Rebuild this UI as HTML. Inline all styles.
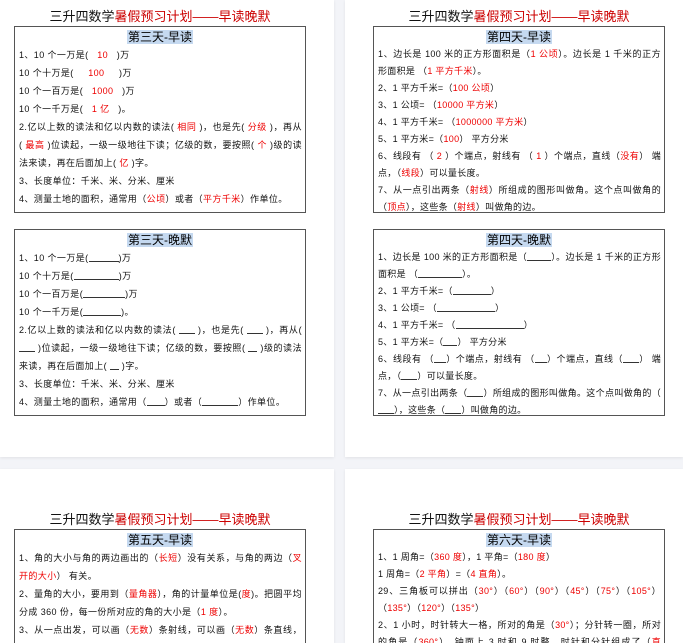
<!DOCTYPE html>
<html style="overflow:hidden;height:643px"><head><meta charset="utf-8"><style>
body{margin:0;width:683px;height:643px;overflow:hidden;background:#f3f4f8;font-family:"Liberation Sans","Noto Sans CJK SC",sans-serif;position:relative}
.pg{position:absolute;background:#fff;box-shadow:0 1px 3px rgba(0,0,0,.08)}
.t{position:absolute;width:292px;text-align:center;font-size:13px;line-height:16px;color:#111}
.t span{color:#c00}
.box{position:absolute;width:290px;border:1px solid #555;box-sizing:content-box;padding:0 0 4px 0;background:#fff;overflow:hidden}
.h{text-align:center;font-size:12px;line-height:18px;height:18px;margin-top:1px}
.h span{background:#c5d9f0;padding:0 1px}
.b{font-size:9px;line-height:18px;color:#111;padding:0 3px 0 4px;text-align:justify;letter-spacing:.4px}
.rb{letter-spacing:.3px;line-height:17px}
.r{color:#e00}
u{text-decoration:none;display:inline-block;border-bottom:1px solid #333;height:9px;vertical-align:-1px}
</style></head><body>
<div class="pg" style="left:0;top:0;width:334px;height:457px"></div>
<div class="pg" style="left:345px;top:0;width:338px;height:457px"></div>
<div class="pg" style="left:0;top:469px;width:334px;height:174px"></div>
<div class="pg" style="left:345px;top:469px;width:338px;height:174px"></div>

<div class="t" style="left:14px;top:9px">三升四数学<span>暑假预习计划——早读晚默</span></div>
<div class="box" style="left:14px;top:26px;height:181px">
<div class="h"><span>第三天-早读</span></div>
<div class="b">1、10 个一万是(&nbsp;&nbsp;&nbsp;<span class="r">10</span>&nbsp;&nbsp;&nbsp;)万<br>10 个十万是(&nbsp;&nbsp;&nbsp;&nbsp;&nbsp;<span class="r">100</span>&nbsp;&nbsp;&nbsp;&nbsp;&nbsp;)万<br>10 个一百万是(&nbsp;&nbsp;&nbsp;<span class="r">1000</span>&nbsp;&nbsp;&nbsp;)万<br>10 个一千万是(&nbsp;&nbsp;&nbsp;<span class="r">1 亿</span>&nbsp;&nbsp;&nbsp;)。<br>2.亿以上数的读法和亿以内数的读法(&nbsp;<span class="r">相同</span>&nbsp;)，也是先(&nbsp;<span class="r">分级</span>&nbsp;)，再从(&nbsp;<span class="r">最高</span>&nbsp;)位读起，一级一级地往下读；亿级的数，要按照(&nbsp;<span class="r">个</span>&nbsp;)级的读法来读，再在后面加上(&nbsp;<span class="r">亿</span>&nbsp;)字。<br>3、长度单位：千米、米、分米、厘米<br>4、测量土地的面积，通常用（<span class="r">公顷</span>）或者（<span class="r">平方千米</span>）作单位。</div>
</div>

<div class="t" style="left:373px;top:9px">三升四数学<span>暑假预习计划——早读晚默</span></div>
<div class="box" style="left:373px;top:26px;height:181px">
<div class="h"><span>第四天-早读</span></div>
<div class="b rb">1、边长是 100 米的正方形面积是（<span class="r">1 公顷</span>）。边长是 1 千米的正方形面积是 （<span class="r">1 平方千米</span>）。<br>2、1 平方千米=（<span class="r">100 公顷</span>）<br>3、1 公顷= （<span class="r">10000 平方米</span>）<br>4、1 平方千米= （<span class="r">1000000 平方米</span>）<br>5、1 平方米=（<span class="r">100</span>） 平方分米<br>6、线段有 （ <span class="r">2</span> ）个端点，射线有 （ <span class="r">1</span> ）个端点，直线（<span class="r">没有</span>） 端点，（<span class="r">线段</span>）可以量长度。<br>7、从一点引出两条（<span class="r">射线</span>）所组成的图形叫做角。这个点叫做角的（<span class="r">顶点</span>），这些条（<span class="r">射线</span>）叫做角的边。</div>
</div>

<div class="box" style="left:14px;top:229px;height:181px">
<div class="h"><span>第三天-晚默</span></div>
<div class="b">1、10 个一万是(<u style="width:30px"></u>)万<br>10 个十万是(<u style="width:45px"></u>)万<br>10 个一百万是(<u style="width:42px"></u>)万<br>10 个一千万是(<u style="width:38px"></u>)。<br>2.亿以上数的读法和亿以内数的读法( <u style="width:16px"></u> )，也是先( <u style="width:16px"></u> )，再从( <u style="width:16px"></u> )位读起，一级一级地往下读；亿级的数，要按照( <u style="width:9px"></u> )级的读法来读，再在后面加上( <u style="width:9px"></u> )字。<br>3、长度单位：千米、米、分米、厘米<br>4、测量土地的面积，通常用（<u style="width:18px"></u>）或者（<u style="width:36px"></u>）作单位。</div>
</div>

<div class="box" style="left:373px;top:229px;height:181px">
<div class="h"><span>第四天-晚默</span></div>
<div class="b rb">1、边长是 100 米的正方形面积是（<u style="width:24px"></u>）。边长是 1 千米的正方形面积是 （<u style="width:44px"></u>）。<br>2、1 平方千米=（<u style="width:38px"></u>）<br>3、1 公顷= （<u style="width:58px"></u>）<br>4、1 平方千米= （<u style="width:68px"></u>）<br>5、1 平方米=（<u style="width:14px"></u>） 平方分米<br>6、线段有 （<u style="width:12px"></u>）个端点，射线有 （<u style="width:12px"></u>）个端点，直线（<u style="width:16px"></u>） 端点，（<u style="width:16px"></u>）可以量长度。<br>7、从一点引出两条（<u style="width:16px"></u>）所组成的图形叫做角。这个点叫做角的（<u style="width:8px"></u><u style="width:8px"></u>），这些条（<u style="width:16px"></u>）叫做角的边。</div>
</div>

<div class="t" style="left:14px;top:512px">三升四数学<span>暑假预习计划——早读晚默</span></div>
<div class="box" style="left:14px;top:529px;height:114px;border-bottom:none;padding:0">
<div class="h"><span>第五天-早读</span></div>
<div class="b">1、角的大小与角的两边画出的（<span class="r">长短</span>）没有关系，与角的两边（<span class="r">叉开的大小</span>） 有关。<br>2、量角的大小，要用到（<span class="r">量角器</span>），角的计量单位是(<span class="r">度</span>)。把圆平均分成 360 份，每一份所对应的角的大小是（<span class="r">1 度</span>）。<br>3、从一点出发，可以画（<span class="r">无数</span>）条射线，可以画（<span class="r">无数</span>）条直线，经过两点可以画（<span class="r">1</span>）条直线。</div>
</div>

<div class="t" style="left:373px;top:512px">三升四数学<span>暑假预习计划——早读晚默</span></div>
<div class="box" style="left:373px;top:529px;height:114px;border-bottom:none;padding:0">
<div class="h"><span>第六天-早读</span></div>
<div class="b rb">1、1 周角=（<span class="r">360 度</span>），1 平角=（<span class="r">180 度</span>）<br>1 周角=（<span class="r">2 平角</span>）=（<span class="r">4 直角</span>）。<br>29、三角板可以拼出（<span class="r">30°</span>）（<span class="r">60°</span>）（<span class="r">90°</span>）（<span class="r">45°</span>）（<span class="r">75°</span>）（<span class="r">105°</span>）（<span class="r">135°</span>）（<span class="r">120°</span>）（<span class="r">135°</span>）<br>2、1 小时，时针转大一格，所对的角是（<span class="r">30°</span>）；分针转一圈，所对的角是（<span class="r">360°</span>）。钟面上 3 时和 9 时整，时针和分针组成了（<span class="r">直角</span>）；钟</div>
</div>
</body></html>
